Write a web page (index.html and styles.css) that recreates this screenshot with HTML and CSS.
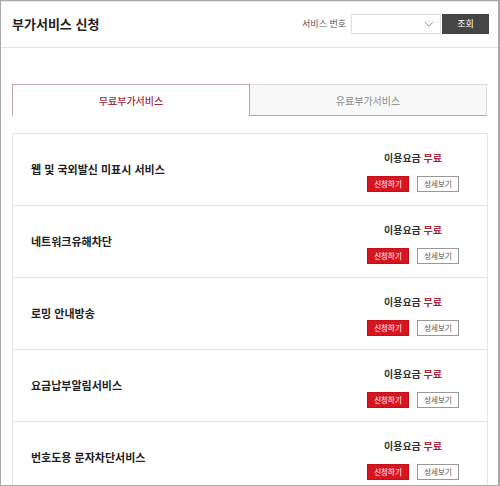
FILE: index.html
```html
<!DOCTYPE html>
<html lang="ko">

<head>
  <meta charset="utf-8">
  <meta name="viewport" content="width=device-width, initial-scale=1.0">
  <title>부가서비스 신청</title>
  <link rel="stylesheet" href="styles.css">
</head>

<body>
  <div id="frame">
    <div id="header">
      <div class="page-title">부가서비스 신청</div>
      <div class="search">
        <span class="search-label">서비스 번호</span>
        <div class="select">
          <svg width="10" height="6" viewBox="0 0 10 6"><path d="M1 1l4 4 4-4" fill="none" stroke="#999" stroke-width="1"/></svg>
        </div>
        <button class="search-button">조회</button>
      </div>
    </div>

    <div class="tabs">
      <div class="tab active">무료부가서비스</div>
      <div class="tab">유료부가서비스</div>
    </div>

    <div class="service-list">
      <div class="service">
        <div class="service-name">웹 및 국외발신 미표시 서비스</div>
        <div class="service-side">
          <div class="fee">이용요금 <span class="free">무료</span></div>
          <div class="actions">
            <button class="apply">신청하기</button>
            <button class="detail">상세보기</button>
          </div>
        </div>
      </div>
      <div class="service">
        <div class="service-name">네트워크유해차단</div>
        <div class="service-side">
          <div class="fee">이용요금 <span class="free">무료</span></div>
          <div class="actions">
            <button class="apply">신청하기</button>
            <button class="detail">상세보기</button>
          </div>
        </div>
      </div>
      <div class="service">
        <div class="service-name">로밍 안내방송</div>
        <div class="service-side">
          <div class="fee">이용요금 <span class="free">무료</span></div>
          <div class="actions">
            <button class="apply">신청하기</button>
            <button class="detail">상세보기</button>
          </div>
        </div>
      </div>
      <div class="service">
        <div class="service-name">요금납부알림서비스</div>
        <div class="service-side">
          <div class="fee">이용요금 <span class="free">무료</span></div>
          <div class="actions">
            <button class="apply">신청하기</button>
            <button class="detail">상세보기</button>
          </div>
        </div>
      </div>
      <div class="service">
        <div class="service-name">번호도용 문자차단서비스</div>
        <div class="service-side">
          <div class="fee">이용요금 <span class="free">무료</span></div>
          <div class="actions">
            <button class="apply">신청하기</button>
            <button class="detail">상세보기</button>
          </div>
        </div>
      </div>
    </div>
  </div>
</body>

</html>
```

FILE: styles.css
```css
body,
html {
  margin: 0;
  padding: 0;
  height: 100%;
  font-family: "Noto Sans CJK KR", "Noto Sans", sans-serif;
  overflow: hidden;
  background: white;
}

#frame {
  height: 486px;
  box-sizing: border-box;
  border: 1px solid #a8a8a8;
  border-right-width: 2px;
  overflow: hidden;
}

#header {
  height: 47px;
  border-top: 1px solid #e8e8e8;
  border-bottom: 1px solid #e3e3e3;
  padding: 0 9px 0 11px;
  display: flex;
  align-items: center;
  justify-content: space-between;
  box-sizing: border-box;
}

.page-title {
  font-size: 13px;
  font-weight: bold;
  color: #222;
  margin-top: -2px;
}

.search {
  display: flex;
  align-items: center;
  margin-top: -2px;
}

.search-label {
  font-size: 9px;
  color: #555;
  margin-right: 5px;
}

.select {
  width: 90px;
  height: 20px;
  box-sizing: border-box;
  border: 1px solid #ddd;
  display: flex;
  align-items: center;
  justify-content: flex-end;
  padding-right: 6px;
}

.search-button {
  width: 47px;
  height: 20px;
  border: none;
  background-color: #454545;
  color: white;
  font-family: inherit;
  font-size: 9px;
  padding: 0;
  margin-left: 1px;
}

.tabs {
  display: flex;
  margin: 36px 11px 0 11px;
  height: 32px;
}

.tab {
  flex: 1;
  display: flex;
  align-items: center;
  justify-content: center;
  font-size: 10px;
  box-sizing: border-box;
}

.tab.active {
  border: 1px solid #c4a5a8;
  border-bottom: none;
  color: #a02a40;
  font-weight: 500;
  background: white;
}

.tab:not(.active) {
  border: 1px solid #ddd;
  border-left: none;
  border-bottom: 1px solid #c99aa0;
  background: #f8f8f8;
  color: #888;
}

.service-list {
  margin: 17px 10px 0 11px;
  border: 1px solid #e6e6e6;
}

.service {
  height: 72px;
  box-sizing: border-box;
  border-bottom: 1px solid #e6e6e6;
  display: flex;
  align-items: center;
  justify-content: space-between;
  padding: 0 28px 0 18px;
}

.service-name {
  font-size: 11px;
  font-weight: bold;
  color: #222;
  margin-top: -2px;
}

.service-side {
  display: flex;
  flex-direction: column;
  align-items: center;
  margin-top: 2px;
}

.fee {
  font-size: 10px;
  font-weight: bold;
  color: #333;
  margin-bottom: 11px;
}

.free {
  color: #a4243c;
}

.actions {
  display: flex;
  gap: 8px;
}

.apply,
.detail {
  width: 42px;
  height: 16px;
  padding: 0;
  font-family: inherit;
  font-size: 7.5px;
  box-sizing: border-box;
}

.apply {
  background-color: #d8141e;
  border: 1px solid #c01018;
  color: white;
}

.detail {
  background-color: white;
  border: 1px solid #999;
  color: #555;
}
```
